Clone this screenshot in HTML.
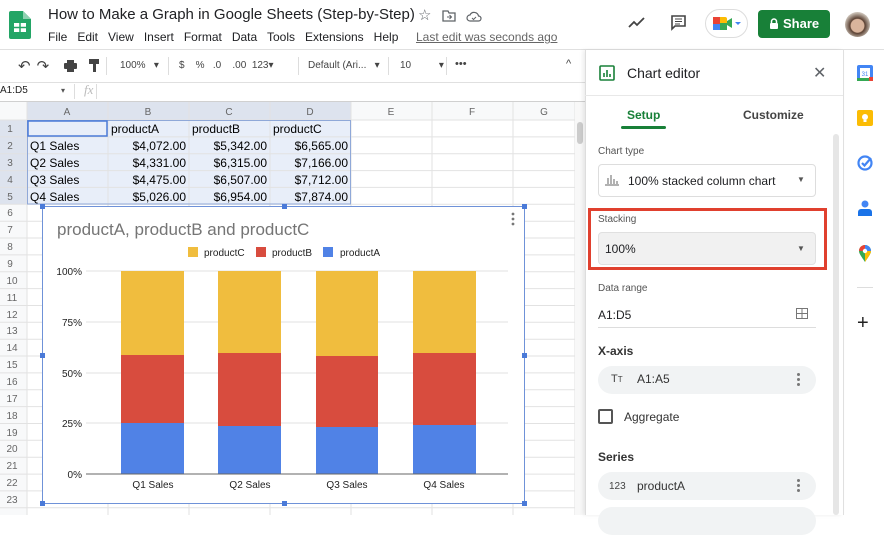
<!DOCTYPE html>
<html><head><meta charset="utf-8"><style>
*{box-sizing:border-box;margin:0;padding:0}
body{width:884px;height:515px;overflow:hidden;background:#fff;font-family:"Liberation Sans",Arial,sans-serif;color:#202124;position:relative}
.a{position:absolute;white-space:nowrap}
.cell{position:absolute;font-size:12px;color:#000;height:17px;line-height:17px}
.rn{position:absolute;left:0;width:27px;text-align:center;font-size:10px;color:#666}
.ch{position:absolute;top:102px;height:18px;line-height:18px;text-align:center;font-size:10px;color:#666;border-right:1px solid #ccc}
.pill{position:absolute;left:598px;width:218px;height:28px;border-radius:14px;background:#f1f3f4}
.dots{position:absolute;width:3px}
.dots i{display:block;width:3px;height:3px;border-radius:50%;background:#777;margin-bottom:2px}
</style></head><body>
<!-- top bar -->
<svg class="a" style="left:9px;top:11px" width="22" height="28" viewBox="0 0 22 28"><path d="M2 0h12l8 8v18a2 2 0 0 1-2 2H2a2 2 0 0 1-2-2V2a2 2 0 0 1 2-2z" fill="#23a566"/><path d="M14 0v8h8z" fill="#8ed1b1"/><rect x="5" y="12" width="12" height="9" fill="#fff"/><path d="M5 16.5h12M11 12v9" stroke="#23a566" stroke-width="1.5"/></svg>
<div class="a" style="left:48px;top:6px;font-size:15px">How to Make a Graph in Google Sheets (Step-by-Step)</div>
<div class="a" style="left:418px;top:6px;font-size:15px;color:#5f6368">☆</div>
<svg class="a" style="left:442px;top:10px" width="14" height="12"><path d="M1 1h5l1 2h6v8H1z" fill="none" stroke="#5f6368" stroke-width="1.3"/><path d="M5 7h4M7.5 5l2 2-2 2" stroke="#5f6368" fill="none"/></svg>
<svg class="a" style="left:466px;top:10px" width="16" height="12"><path d="M4 11a3 3 0 0 1 0-6 4.5 4.5 0 0 1 8.5 1 2.5 2.5 0 0 1 0 5z" fill="none" stroke="#5f6368" stroke-width="1.2"/><path d="M6 8l1.5 1.5L10 7" stroke="#5f6368" fill="none"/></svg>
<div class="a" style="left:48px;top:30px;font-size:12px">File&nbsp;&nbsp; Edit&nbsp;&nbsp; View&nbsp;&nbsp; Insert&nbsp;&nbsp; Format&nbsp;&nbsp; Data&nbsp;&nbsp; Tools&nbsp;&nbsp; Extensions&nbsp;&nbsp; Help</div>
<div class="a" style="left:416px;top:30px;font-size:12px;color:#666;text-decoration:underline">Last edit was seconds ago</div>
<svg class="a" style="left:628px;top:16px" width="18" height="12"><path d="M1 11l5-5 3 3 7-7" fill="none" stroke="#444" stroke-width="1.8"/></svg>
<svg class="a" style="left:670px;top:14px" width="18" height="18"><path d="M2 2h13v10H5l-3 3z" fill="none" stroke="#444" stroke-width="1.6"/><path d="M5 5h7M5 7.5h7M5 10h5" stroke="#444"/></svg>
<div class="a" style="left:705px;top:9px;width:43px;height:29px;border-radius:15px;border:1px solid #ddd"></div>
<svg class="a" style="left:713px;top:16px" width="28" height="16"><rect x="0" y="1" width="14" height="13" rx="2" fill="#fbbc04"/><rect x="0" y="1" width="7" height="7" fill="#ea4335"/><rect x="7" y="7" width="7" height="7" fill="#34a853"/><rect x="0" y="8" width="7" height="6" fill="#4285f4"/><path d="M14 5l5-3v10l-5-3z" fill="#34a853"/><path d="M22 6l3 3 3-3z" fill="#4285f4"/></svg>
<div class="a" style="left:758px;top:10px;width:72px;height:28px;background:#188038;border-radius:4px;color:#fff;font-size:13px;font-weight:bold;line-height:28px;padding-left:25px">Share</div>
<svg class="a" style="left:769px;top:18px" width="10" height="11"><path d="M2.5 5V3.5a2.5 2.5 0 0 1 5 0V5" fill="none" stroke="#fff" stroke-width="1.5"/><rect x="1" y="5" width="8" height="6" rx="1" fill="#fff"/></svg>
<div class="a" style="left:845px;top:12px;width:25px;height:25px;border-radius:50%;background:radial-gradient(circle at 50% 55%,#d9b49c 0 35%,#5a4032 40%,#c9bfb4 70%)"></div>
<div class="a" style="left:0;top:49px;width:884px;height:1px;background:#e0e0e0"></div>
<!-- toolbar -->
<div class="a" style="left:0;top:50px;width:585px;height:32px;background:#fff"></div>
<div class="a" style="left:18px;top:57px;font-size:15px;color:#444;letter-spacing:6px">↶↷</div>
<svg class="a" style="left:64px;top:60px" width="13" height="12"><rect x="3" y="0" width="7" height="3" fill="#444"/><rect x="0" y="3" width="13" height="6" rx="1" fill="#444"/><rect x="3" y="7" width="7" height="5" fill="#444"/></svg>
<svg class="a" style="left:89px;top:59px" width="10" height="14"><rect x="0" y="0" width="10" height="5" fill="#444"/><rect x="4" y="5" width="3" height="8" fill="#444"/></svg>
<div class="a" style="left:106px;top:57px;width:1px;height:18px;background:#ddd"></div>
<div class="a" style="left:120px;top:60px;font-size:10px;color:#444">100%&nbsp;&nbsp;&nbsp;▾</div>
<div class="a" style="left:168px;top:57px;width:1px;height:18px;background:#ddd"></div>
<div class="a" style="left:179px;top:60px;font-size:10px;color:#444">$&nbsp;&nbsp;&nbsp;&nbsp;%&nbsp;&nbsp;&nbsp;.0&nbsp;&nbsp;&nbsp;&nbsp;.00&nbsp;&nbsp;123▾</div>
<div class="a" style="left:298px;top:57px;width:1px;height:18px;background:#ddd"></div>
<div class="a" style="left:308px;top:60px;font-size:10px;color:#444">Default (Ari...&nbsp;&nbsp;&nbsp;▾</div>
<div class="a" style="left:388px;top:57px;width:1px;height:18px;background:#ddd"></div>
<div class="a" style="left:400px;top:60px;font-size:10px;color:#444">10&nbsp;&nbsp;&nbsp;&nbsp;&nbsp;&nbsp;&nbsp;&nbsp;&nbsp;&nbsp;▾</div>
<div class="a" style="left:446px;top:57px;width:1px;height:18px;background:#ddd"></div>
<div class="a" style="left:455px;top:58px;font-size:11px;color:#444">•••</div>
<div class="a" style="left:566px;top:58px;font-size:11px;color:#444">^</div>
<div class="a" style="left:0;top:82px;width:585px;height:1px;background:#e0e0e0"></div>
<div class="a" style="left:0;top:85px;font-size:10px;color:#222">A1:D5</div>
<div class="a" style="left:61px;top:86px;font-size:8px;color:#555">▾</div>
<div class="a" style="left:74px;top:84px;width:1px;height:15px;background:#ddd"></div>
<div class="a" style="left:84px;top:82px;font-size:13px;font-style:italic;color:#bbb;font-family:'Liberation Serif',serif">fx</div>
<div class="a" style="left:96px;top:84px;width:1px;height:15px;background:#ddd"></div>
<div class="a" style="left:0;top:101px;width:585px;height:1px;background:#d0d0d0"></div>
<!-- grid -->
<svg class="a" style="left:0;top:102px" width="585" height="413">
<rect x="0" y="0" width="575" height="18" fill="#f8f9fa"/>
<rect x="0" y="0" width="27" height="413" fill="#f8f9fa"/>
<rect x="27" y="0" width="324" height="18" fill="#dde3ee"/>
<rect x="0" y="18" width="27" height="84.3" fill="#dde3ee"/>
<rect x="27" y="18" width="324" height="84.3" fill="#e8eef9"/>
<g stroke="#e2e2e2" stroke-width="1">
<path d="M27 0V413M108 0V413M189 0V413M270 0V413M351 0V413M432 0V413M513 0V413M575 0V413"/>
<path id="h" d="M0 18H575M0 34.9H575M0 51.7H575M0 68.6H575M0 85.4H575M0 102.3H575M0 119.2H575M0 136H575M0 152.9H575M0 169.7H575M0 186.6H575M0 203.5H575M0 220.3H575M0 237.2H575M0 254H575M0 270.9H575M0 287.8H575M0 304.6H575M0 321.5H575M0 338.3H575M0 355.2H575M0 372.1H575M0 388.9H575M0 405.8H575"/>
</g>
<rect x="27.5" y="18.5" width="323" height="83.5" fill="none" stroke="#8fa8d8"/>
<rect x="28" y="19" width="79" height="15" fill="none" stroke="#4a7ad8" stroke-width="1.5"/>
<rect x="575" y="0" width="10" height="413" fill="#f8f8f8"/>
<rect x="577" y="20" width="6" height="22" rx="3" fill="#ccc"/>
<g font-size="10" fill="#666" text-anchor="middle" font-family="Liberation Sans">
<text x="67" y="13">A</text><text x="148" y="13">B</text><text x="229" y="13">C</text><text x="310" y="13">D</text><text x="391" y="13">E</text><text x="472" y="13">F</text><text x="544" y="13">G</text>
<text x="10" y="30">1</text><text x="10" y="47">2</text><text x="10" y="64">3</text><text x="10" y="81">4</text><text x="10" y="98">5</text><text x="10" y="114">6</text><text x="10" y="131">7</text><text x="10" y="148">8</text><text x="10" y="165">9</text><text x="12" y="182">10</text><text x="12" y="199">11</text><text x="12" y="216">12</text><text x="12" y="232">13</text><text x="12" y="249">14</text><text x="12" y="266">15</text><text x="12" y="283">16</text><text x="12" y="300">17</text><text x="12" y="317">18</text><text x="12" y="334">19</text><text x="12" y="350">20</text><text x="12" y="367">21</text><text x="12" y="384">22</text><text x="12" y="401">23</text>
</g>
<g font-size="12" fill="#000" font-family="Liberation Sans">
<text x="111" y="31">productA</text><text x="192" y="31">productB</text><text x="273" y="31">productC</text>
<text x="30" y="48">Q1 Sales</text><text x="30" y="65">Q2 Sales</text><text x="30" y="82">Q3 Sales</text><text x="30" y="99">Q4 Sales</text>
</g>
<g font-size="12" fill="#000" text-anchor="end" font-family="Liberation Sans">
<text x="186" y="48">$4,072.00</text><text x="267" y="48">$5,342.00</text><text x="348" y="48">$6,565.00</text>
<text x="186" y="65">$4,331.00</text><text x="267" y="65">$6,315.00</text><text x="348" y="65">$7,166.00</text>
<text x="186" y="82">$4,475.00</text><text x="267" y="82">$6,507.00</text><text x="348" y="82">$7,712.00</text>
<text x="186" y="99">$5,026.00</text><text x="267" y="99">$6,954.00</text><text x="348" y="99">$7,874.00</text>
</g>
</svg>
<!-- chart -->
<svg class="a" style="left:38px;top:202px" width="492" height="307" font-family="Liberation Sans">
<rect x="4.5" y="4.5" width="482" height="297" fill="#fff" stroke="#6f92d8"/>
<text x="19" y="33" font-size="17" fill="#757575">productA, productB and productC</text>
<circle cx="475" cy="12" r="1.4" fill="#777"/><circle cx="475" cy="17" r="1.4" fill="#777"/><circle cx="475" cy="22" r="1.4" fill="#777"/>
<rect x="150" y="45" width="10" height="10" fill="#f0bd3e"/><text x="166" y="54" font-size="10" fill="#222">productC</text>
<rect x="218" y="45" width="10" height="10" fill="#d84c3e"/><text x="234" y="54" font-size="10" fill="#222">productB</text>
<rect x="285" y="45" width="10" height="10" fill="#5082e6"/><text x="302" y="54" font-size="10" fill="#222">productA</text>
<g stroke="#e0e0e0"><path d="M48 69H470M48 120H470M48 171H470M48 221H470"/></g>
<g font-size="10" fill="#222" text-anchor="end"><text x="44" y="73">100%</text><text x="44" y="124">75%</text><text x="44" y="175">50%</text><text x="44" y="225">25%</text><text x="44" y="276">0%</text></g>
<g>
<rect x="83" y="69" width="63" height="84" fill="#f0bd3e"/><rect x="83" y="153" width="63" height="68" fill="#d84c3e"/><rect x="83" y="221" width="63" height="51" fill="#5082e6"/>
<rect x="180" y="69" width="63" height="82" fill="#f0bd3e"/><rect x="180" y="151" width="63" height="73" fill="#d84c3e"/><rect x="180" y="224" width="63" height="48" fill="#5082e6"/>
<rect x="278" y="69" width="62" height="85" fill="#f0bd3e"/><rect x="278" y="154" width="62" height="71" fill="#d84c3e"/><rect x="278" y="225" width="62" height="47" fill="#5082e6"/>
<rect x="375" y="69" width="63" height="82" fill="#f0bd3e"/><rect x="375" y="151" width="63" height="72" fill="#d84c3e"/><rect x="375" y="223" width="63" height="49" fill="#5082e6"/>
</g>
<path d="M48 272H470" stroke="#666"/>
<g font-size="10" fill="#222" text-anchor="middle"><text x="115" y="286">Q1 Sales</text><text x="212" y="286">Q2 Sales</text><text x="309" y="286">Q3 Sales</text><text x="406" y="286">Q4 Sales</text></g>
<g fill="#4a7ad8"><rect x="2" y="2" width="5" height="5"/><rect x="244" y="2" width="5" height="5"/><rect x="484" y="2" width="5" height="5"/><rect x="2" y="151" width="5" height="5"/><rect x="484" y="151" width="5" height="5"/><rect x="2" y="299" width="5" height="5"/><rect x="244" y="299" width="5" height="5"/><rect x="484" y="299" width="5" height="5"/></g>
</svg>
<!-- chart editor panel -->
<div class="a" style="left:585px;top:50px;width:258px;height:465px;background:#fff;border-left:1px solid #ddd;box-shadow:-2px 0 4px rgba(0,0,0,.08)"></div>
<svg class="a" style="left:599px;top:65px" width="16" height="16"><rect x="1" y="1" width="14" height="14" rx="1" fill="none" stroke="#188038" stroke-width="1.6"/><path d="M5 12V8M8 12V5M11 12V9" stroke="#188038" stroke-width="1.6"/></svg>
<div class="a" style="left:627px;top:65px;font-size:14px;color:#202124">Chart editor</div>
<div class="a" style="left:813px;top:63px;font-size:16px;color:#5f6368">✕</div>
<div class="a" style="left:585px;top:95px;width:258px;height:1px;background:#e8e8e8"></div>
<div class="a" style="left:627px;top:108px;font-size:12px;color:#188038;font-weight:bold">Setup</div>
<div class="a" style="left:621px;top:126px;width:45px;height:3px;background:#188038;border-radius:2px"></div>
<div class="a" style="left:743px;top:108px;font-size:12px;color:#444;font-weight:bold">Customize</div>
<div class="a" style="left:833px;top:134px;width:6px;height:381px;background:#e6e6e6;border-radius:3px"></div>
<div class="a" style="left:598px;top:146px;font-size:10px;color:#555">Chart type</div>
<div class="a" style="left:598px;top:164px;width:218px;height:33px;border:1px solid #ddd;border-radius:4px"></div>
<svg class="a" style="left:605px;top:172px" width="14" height="14"><path d="M0 13H14M3 12V6M6 12V3M9 12V7M12 12V9" stroke="#666"/></svg>
<div class="a" style="left:628px;top:174px;font-size:12px">100% stacked column chart</div>
<div class="a" style="left:797px;top:175px;font-size:8px;color:#555">▼</div>
<div class="a" style="left:588px;top:208px;width:239px;height:62px;border:3px solid #e0402e"></div>
<div class="a" style="left:598px;top:214px;font-size:10px;color:#555">Stacking</div>
<div class="a" style="left:598px;top:232px;width:218px;height:33px;background:#f1f1f1;border:1px solid #e0e0e0;border-radius:4px"></div>
<div class="a" style="left:605px;top:242px;font-size:12px">100%</div>
<div class="a" style="left:797px;top:244px;font-size:8px;color:#555">▼</div>
<div class="a" style="left:598px;top:283px;font-size:10px;color:#555">Data range</div>
<div class="a" style="left:598px;top:308px;font-size:12px">A1:D5</div>
<svg class="a" style="left:796px;top:308px" width="12" height="11"><rect x=".5" y=".5" width="11" height="10" fill="none" stroke="#777"/><path d="M6 0V11M0 5.5H12" stroke="#777"/></svg>
<div class="a" style="left:598px;top:327px;width:218px;height:1px;background:#ddd"></div>
<div class="a" style="left:598px;top:344px;font-size:12px;font-weight:bold;color:#333">X-axis</div>
<div class="pill" style="top:366px"></div>
<div class="a" style="left:611px;top:373px;font-size:11px;color:#444">T<span style="font-size:8px">T</span></div>
<div class="a" style="left:637px;top:372px;font-size:12px;color:#333">A1:A5</div>
<div class="dots" style="left:797px;top:373px"><i></i><i></i><i></i></div>
<div class="a" style="left:598px;top:409px;width:15px;height:15px;border:2px solid #555;border-radius:2px"></div>
<div class="a" style="left:624px;top:410px;font-size:12px;color:#333">Aggregate</div>
<div class="a" style="left:598px;top:450px;font-size:12px;font-weight:bold;color:#333">Series</div>
<div class="pill" style="top:472px"></div>
<div class="a" style="left:609px;top:481px;font-size:10px;color:#444">123</div>
<div class="a" style="left:637px;top:479px;font-size:12px;color:#333">productA</div>
<div class="dots" style="left:797px;top:479px"><i></i><i></i><i></i></div>
<div class="pill" style="top:507px"></div>
<!-- side bar -->
<div class="a" style="left:843px;top:50px;width:1px;height:465px;background:#e0e0e0"></div>
<svg class="a" style="left:857px;top:65px" width="16" height="16"><rect x="0" y="0" width="16" height="16" rx="2" fill="#4285f4"/><rect x="3" y="3" width="10" height="10" fill="#fff"/><rect x="12" y="12" width="4" height="4" fill="#ea4335"/><rect x="0" y="13" width="12" height="3" fill="#34a853"/><text x="8" y="11" font-size="6" text-anchor="middle" fill="#4285f4" font-family="Liberation Sans">31</text></svg>
<svg class="a" style="left:857px;top:110px" width="16" height="16"><rect width="16" height="16" rx="2" fill="#fbbc04"/><circle cx="8" cy="7" r="3" fill="#fff"/><rect x="6.5" y="10" width="3" height="2" fill="#fff"/></svg>
<svg class="a" style="left:857px;top:155px" width="16" height="16"><circle cx="8" cy="8" r="6.5" fill="none" stroke="#4285f4" stroke-width="2.2"/><path d="M5 8l2.5 2.5L14 3" fill="none" stroke="#4285f4" stroke-width="2.2"/></svg>
<svg class="a" style="left:858px;top:200px" width="14" height="16"><circle cx="7" cy="4" r="3.5" fill="#4285f4"/><path d="M0 16v-4a3 3 0 0 1 3-3h8a3 3 0 0 1 3 3v4z" fill="#1a73e8"/></svg>
<svg class="a" style="left:859px;top:245px" width="12" height="17"><path d="M6 17C2 11 0 8.5 0 6a6 6 0 0 1 12 0c0 2.5-2 5-6 11z" fill="#34a853"/><path d="M0 6a6 6 0 0 1 6-6v6z" fill="#ea4335"/><path d="M12 6a6 6 0 0 0-6-6v6z" fill="#4285f4"/><path d="M6 6h6c0 2.5-2 5-6 11z" fill="#fbbc04"/><circle cx="6" cy="6" r="2.2" fill="#fff"/></svg>
<div class="a" style="left:857px;top:287px;width:16px;height:1px;background:#ddd"></div>
<div class="a" style="left:857px;top:313px;font-size:20px;color:#222;line-height:20px">+</div>
</body></html>
